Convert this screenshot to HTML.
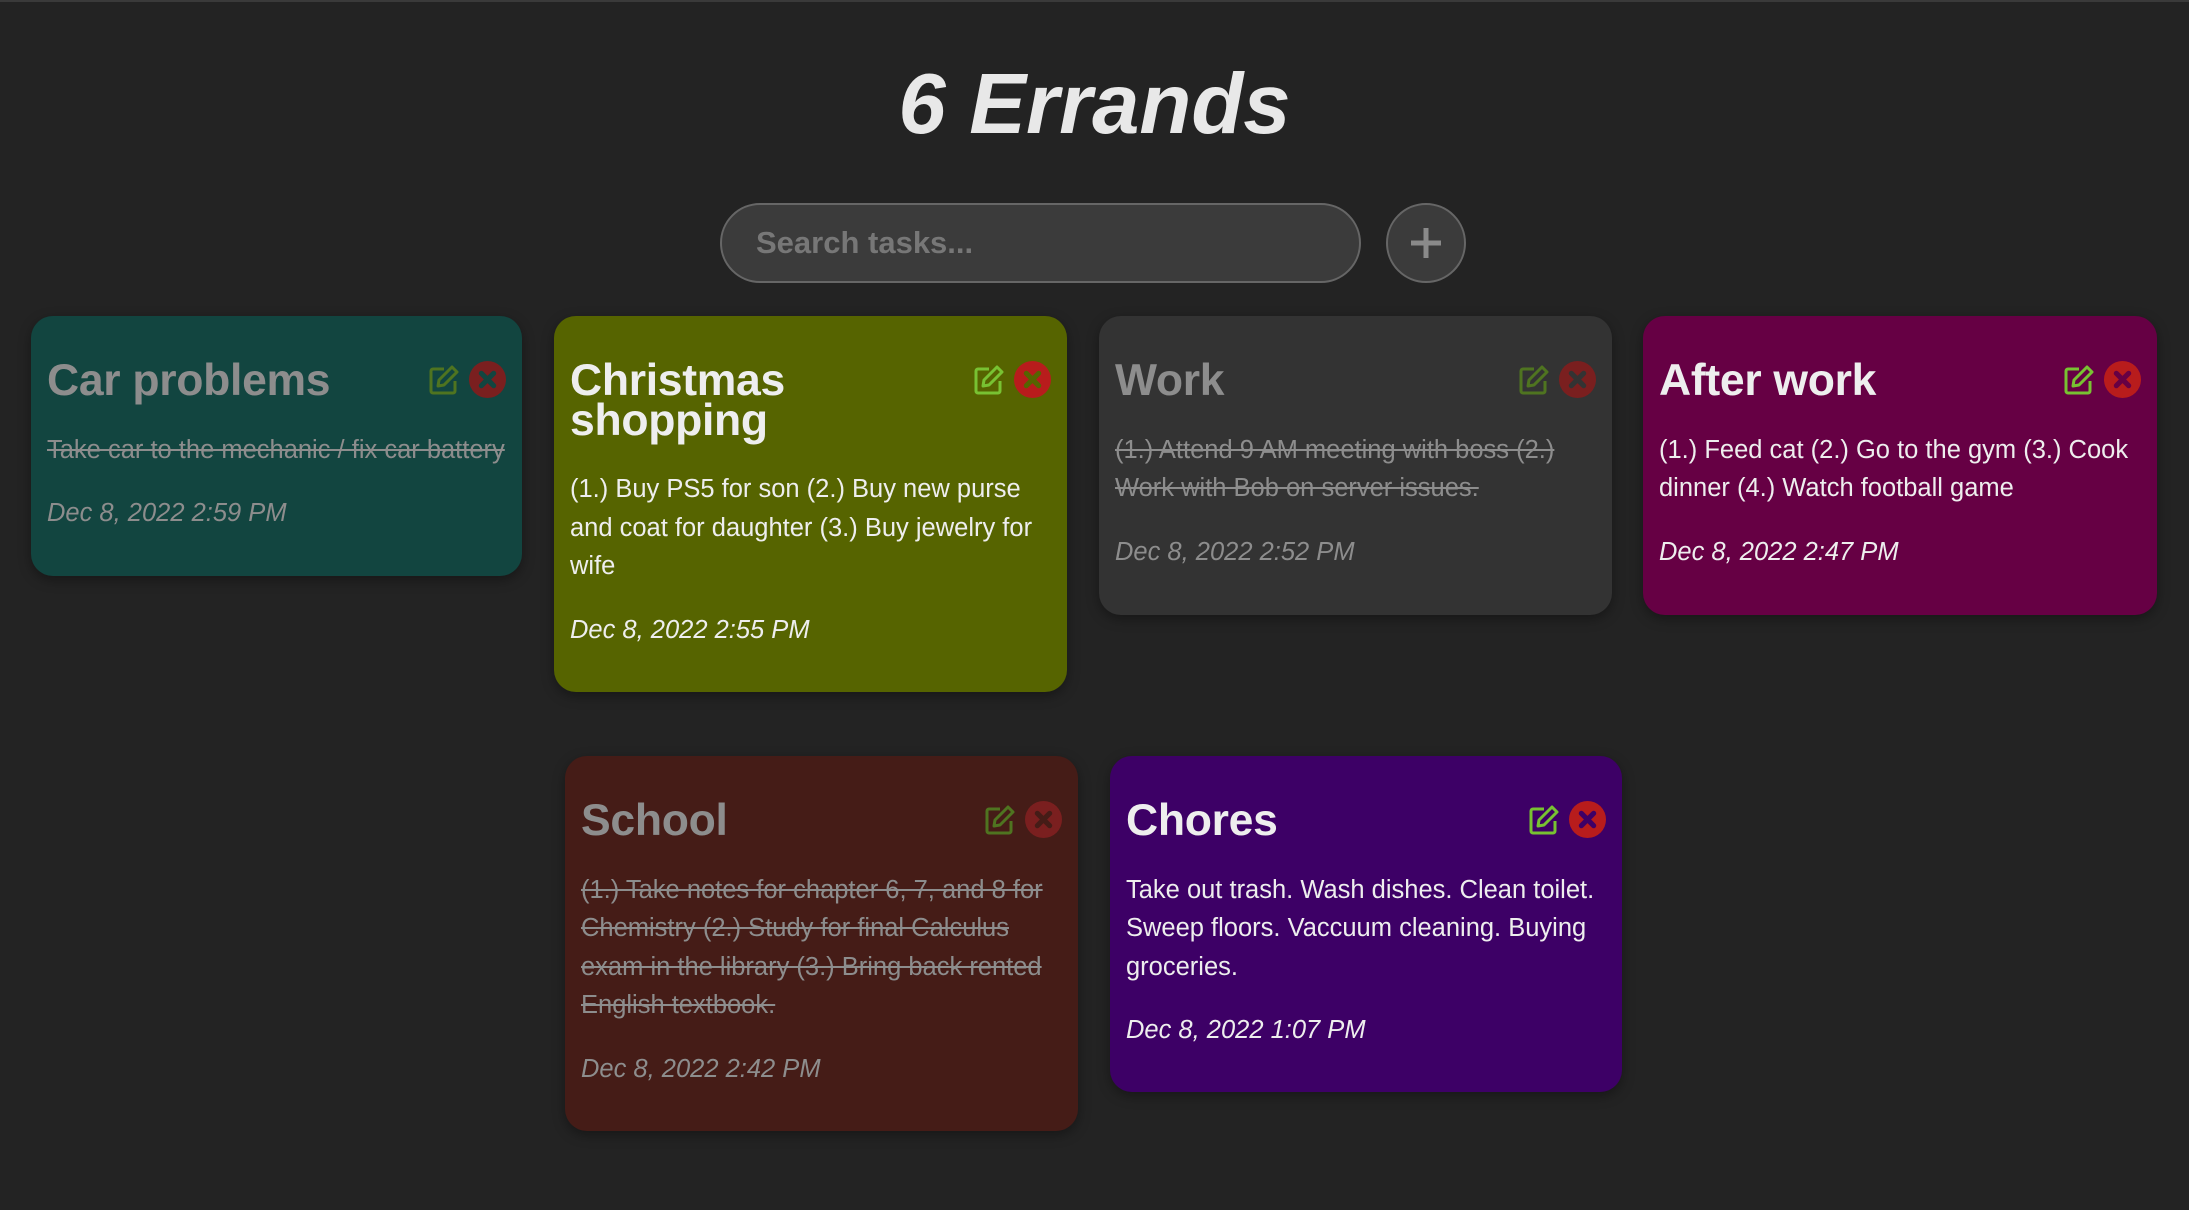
<!DOCTYPE html>
<html><head><meta charset="utf-8"><style>
*{margin:0;padding:0;box-sizing:border-box}
body{width:2189px;height:1210px;background:#232323;font-family:"Liberation Sans",Arial,sans-serif;position:relative;overflow:hidden;border-top:2px solid #3a3a3a}
h1{position:absolute;left:0;width:2189px;top:54px;text-align:center;font-size:85px;font-style:italic;font-weight:bold;color:#e8e8e8}
.search{position:absolute;left:720px;top:201px;width:641px;height:80px;border:2px solid #666;border-radius:40px;background:#3b3b3b;color:#777;font-weight:bold;font-size:31px;line-height:76px;padding-left:34px}
.plus{position:absolute;left:1386px;top:201px;width:80px;height:80px;border:2px solid #666;border-radius:50%;background:#3b3b3b}
.plus:before,.plus:after{content:"";position:absolute;background:#8a8a8a;left:50%;top:50%;transform:translate(-50%,-50%)}
.plus:before{width:30px;height:5px}.plus:after{width:5px;height:30px}
.card{position:absolute;border-radius:22px;padding:45px 16px 43px 16px;box-shadow:0 4px 12px rgba(0,0,0,.35);color:#eee}
.card h2{font-size:44.5px;line-height:39.5px;font-weight:bold;width:380px;letter-spacing:-0.3px}
.card p{font-size:25.5px;line-height:38.5px;margin-top:30px;white-space:nowrap}
.card .d{font-style:italic;margin-top:25px}
.done{color:#8d8d8d}
.done p.t{text-decoration:line-through}
.icons{position:absolute;right:16px;top:45px;display:flex;gap:8px;align-items:center}
</style></head><body>
<h1>6 Errands</h1>
<div class="search">Search tasks...</div>
<div class="plus"></div>

<div class="card done" style="left:31px;top:314px;width:491px;height:260px;background:#124540">
<h2>Car problems</h2>
<div class="icons"><svg width="34" height="34" viewBox="0 0 34 34"><path d="M17 6H6a2 2 0 0 0-2 2v20a2 2 0 0 0 2 2h20a2 2 0 0 0 2-2V18" fill="none" stroke="#4f7420" stroke-width="3"/><path d="M25 4l5 5-13 13-6 1 1-6z" fill="none" stroke="#4f7420" stroke-width="3" stroke-linejoin="round"/></svg><svg width="37" height="37" viewBox="0 0 36 36"><circle cx="18" cy="18" r="18" fill="#7a1f1f"/><path d="M12 12l12 12M24 12L12 24" stroke="#124540" stroke-width="5" stroke-linecap="round"/></svg></div>
<p class="t">Take car to the mechanic / fix car battery</p>
<p class="d">Dec 8, 2022 2:59 PM</p>
</div>

<div class="card" style="left:554px;top:314px;width:513px;height:376px;background:#566400">
<h2>Christmas<br>shopping</h2>
<div class="icons"><svg width="34" height="34" viewBox="0 0 34 34"><path d="M17 6H6a2 2 0 0 0-2 2v20a2 2 0 0 0 2 2h20a2 2 0 0 0 2-2V18" fill="none" stroke="#78c232" stroke-width="3"/><path d="M25 4l5 5-13 13-6 1 1-6z" fill="none" stroke="#78c232" stroke-width="3" stroke-linejoin="round"/></svg><svg width="37" height="37" viewBox="0 0 36 36"><circle cx="18" cy="18" r="18" fill="#b81c1c"/><path d="M12 12l12 12M24 12L12 24" stroke="#566400" stroke-width="5" stroke-linecap="round"/></svg></div>
<p>(1.) Buy PS5 for son (2.) Buy new purse<br>and coat for daughter (3.) Buy jewelry for<br>wife</p>
<p class="d">Dec 8, 2022 2:55 PM</p>
</div>

<div class="card done" style="left:1099px;top:314px;width:513px;height:299px;background:#333333">
<h2>Work</h2>
<div class="icons"><svg width="34" height="34" viewBox="0 0 34 34"><path d="M17 6H6a2 2 0 0 0-2 2v20a2 2 0 0 0 2 2h20a2 2 0 0 0 2-2V18" fill="none" stroke="#4f7420" stroke-width="3"/><path d="M25 4l5 5-13 13-6 1 1-6z" fill="none" stroke="#4f7420" stroke-width="3" stroke-linejoin="round"/></svg><svg width="37" height="37" viewBox="0 0 36 36"><circle cx="18" cy="18" r="18" fill="#7a1f1f"/><path d="M12 12l12 12M24 12L12 24" stroke="#333" stroke-width="5" stroke-linecap="round"/></svg></div>
<p class="t">(1.) Attend 9 AM meeting with boss (2.)<br>Work with Bob on server issues.</p>
<p class="d">Dec 8, 2022 2:52 PM</p>
</div>

<div class="card" style="left:1643px;top:314px;width:514px;height:299px;background:#660044">
<h2>After work</h2>
<div class="icons"><svg width="34" height="34" viewBox="0 0 34 34"><path d="M17 6H6a2 2 0 0 0-2 2v20a2 2 0 0 0 2 2h20a2 2 0 0 0 2-2V18" fill="none" stroke="#78c232" stroke-width="3"/><path d="M25 4l5 5-13 13-6 1 1-6z" fill="none" stroke="#78c232" stroke-width="3" stroke-linejoin="round"/></svg><svg width="37" height="37" viewBox="0 0 36 36"><circle cx="18" cy="18" r="18" fill="#b81c1c"/><path d="M12 12l12 12M24 12L12 24" stroke="#660044" stroke-width="5" stroke-linecap="round"/></svg></div>
<p>(1.) Feed cat (2.) Go to the gym (3.) Cook<br>dinner (4.) Watch football game</p>
<p class="d">Dec 8, 2022 2:47 PM</p>
</div>

<div class="card done" style="left:565px;top:754px;width:513px;height:375px;background:#451c17">
<h2>School</h2>
<div class="icons"><svg width="34" height="34" viewBox="0 0 34 34"><path d="M17 6H6a2 2 0 0 0-2 2v20a2 2 0 0 0 2 2h20a2 2 0 0 0 2-2V18" fill="none" stroke="#4f7420" stroke-width="3"/><path d="M25 4l5 5-13 13-6 1 1-6z" fill="none" stroke="#4f7420" stroke-width="3" stroke-linejoin="round"/></svg><svg width="37" height="37" viewBox="0 0 36 36"><circle cx="18" cy="18" r="18" fill="#7a1f1f"/><path d="M12 12l12 12M24 12L12 24" stroke="#451c17" stroke-width="5" stroke-linecap="round"/></svg></div>
<p class="t">(1.) Take notes for chapter 6, 7, and 8 for<br>Chemistry (2.) Study for final Calculus<br>exam in the library (3.) Bring back rented<br>English textbook.</p>
<p class="d">Dec 8, 2022 2:42 PM</p>
</div>

<div class="card" style="left:1110px;top:754px;width:512px;height:336px;background:#3d0066">
<h2>Chores</h2>
<div class="icons"><svg width="34" height="34" viewBox="0 0 34 34"><path d="M17 6H6a2 2 0 0 0-2 2v20a2 2 0 0 0 2 2h20a2 2 0 0 0 2-2V18" fill="none" stroke="#78c232" stroke-width="3"/><path d="M25 4l5 5-13 13-6 1 1-6z" fill="none" stroke="#78c232" stroke-width="3" stroke-linejoin="round"/></svg><svg width="37" height="37" viewBox="0 0 36 36"><circle cx="18" cy="18" r="18" fill="#b81c1c"/><path d="M12 12l12 12M24 12L12 24" stroke="#3d0066" stroke-width="5" stroke-linecap="round"/></svg></div>
<p>Take out trash. Wash dishes. Clean toilet.<br>Sweep floors. Vaccuum cleaning. Buying<br>groceries.</p>
<p class="d">Dec 8, 2022 1:07 PM</p>
</div>
</body></html>
